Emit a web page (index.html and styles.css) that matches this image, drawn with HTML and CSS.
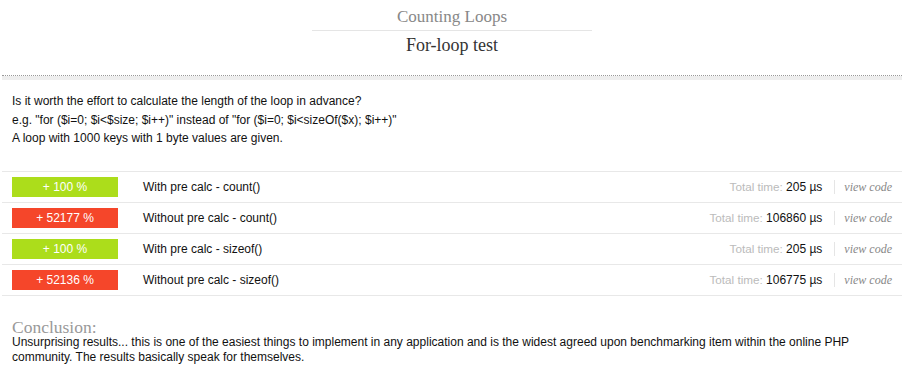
FILE: index.html
```html
<!DOCTYPE html>
<html lang="en">
<head>
    <meta charset="UTF-8">
    <title>Counting Loops - For-loop test</title>
    <link rel="stylesheet" href="styles.css">
</head>
<body>
    <div class="page">
        <header>
            <h1>Counting Loops</h1>
            <h2>For-loop test</h2>
        </header>

        <section class="intro">
            <p>Is it worth the effort to calculate the length of the loop in advance?</p>
            <p>e.g. "for ($i=0; $i&lt;$size; $i++)" instead of "for ($i=0; $i&lt;sizeOf($x); $i++)"</p>
            <p>A loop with 1000 keys with 1 byte values are given.</p>
        </section>

        <ul class="results">
            <li class="result">
                <span class="badge good">+ 100 %</span>
                <span class="label">With pre calc - count()</span>
                <span class="time">Total time: <b>205 µs</b></span>
                <a class="code" href="#">view code</a>
            </li>
            <li class="result">
                <span class="badge bad">+ 52177 %</span>
                <span class="label">Without pre calc - count()</span>
                <span class="time">Total time: <b>106860 µs</b></span>
                <a class="code" href="#">view code</a>
            </li>
            <li class="result">
                <span class="badge good">+ 100 %</span>
                <span class="label">With pre calc - sizeof()</span>
                <span class="time">Total time: <b>205 µs</b></span>
                <a class="code" href="#">view code</a>
            </li>
            <li class="result">
                <span class="badge bad">+ 52136 %</span>
                <span class="label">Without pre calc - sizeof()</span>
                <span class="time">Total time: <b>106775 µs</b></span>
                <a class="code" href="#">view code</a>
            </li>
        </ul>

        <section class="conclusion">
            <h3>Conclusion:</h3>
            <p>Unsurprising results... this is one of the easiest things to implement in any application and is the widest agreed upon benchmarking item within the online PHP community. The results basically speak for themselves.</p>
        </section>
    </div>
</body>
</html>
```

FILE: styles.css
```css
body {
    margin: 0;
    padding: 0;
    background: #fff;
    color: #111;
    font-family: "Liberation Sans", Arial, sans-serif;
    font-size: 12px;
}

.page {
    margin: 0 2px;
}

header {
    text-align: center;
    padding-top: 7px;
    height: 68px;
    border-bottom: 1px dotted #999;
    box-shadow: 0 4px 0 #eee;
}

header h1 {
    width: 280px;
    margin: 0 auto;
    padding-bottom: 4px;
    border-bottom: 1px solid #e5e5e5;
    font-family: "Liberation Serif", "Times New Roman", serif;
    font-weight: normal;
    font-size: 17px;
    line-height: 19px;
    color: #888;
}

header h2 {
    margin: 4px 0 0;
    font-family: "Liberation Serif", "Times New Roman", serif;
    font-weight: normal;
    font-size: 18px;
    line-height: 20px;
    color: #333;
}

.intro {
    padding: 16px 10px 0;
}

.intro p {
    margin: 0;
    line-height: 18.5px;
}

.results {
    list-style: none;
    margin: 23px 0 0;
    padding: 0;
    border-bottom: 1px solid #e8e8e8;
}

.result {
    display: flex;
    align-items: center;
    padding: 5px 10px 5px;
    border-top: 1px solid #e8e8e8;
}

.badge {
    width: 106px;
    height: 20px;
    line-height: 20px;
    text-align: center;
    color: #fff;
}

.good {
    background: #acdd1b;
}

.bad {
    background: #f5462a;
}

.label {
    flex: 1;
    margin-left: 25px;
}

.time {
    color: #bbb;
    font-size: 11.7px;
}

.time b {
    font-weight: normal;
    font-size: 12px;
    color: #111;
}

.code {
    margin-left: 12px;
    padding-left: 9px;
    border-left: 1px solid #e5e5e5;
    line-height: 14px;
    font-family: "Liberation Serif", "Times New Roman", serif;
    font-style: italic;
    font-size: 12px;
    color: #888;
    text-decoration: none;
}

.conclusion {
    padding: 24px 10px 0;
}

.conclusion h3 {
    margin: 0;
    font-family: "Liberation Serif", "Times New Roman", serif;
    font-weight: normal;
    font-size: 17.5px;
    line-height: 15px;
    color: #999;
}

.conclusion p {
    max-width: 860px;
    margin: 0;
    font-size: 12px;
    line-height: 15px;
}
```
